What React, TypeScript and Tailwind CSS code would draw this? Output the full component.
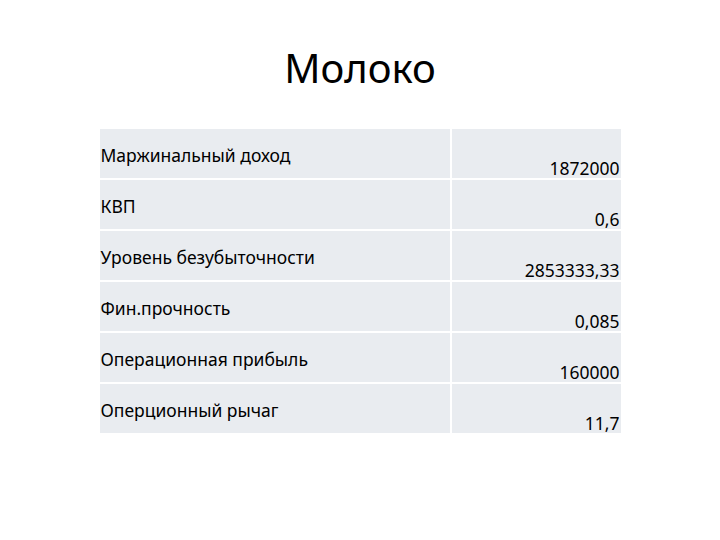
const rows = [
  { label: "Маржинальный доход", value: "1872000" },
  { label: "КВП", value: "0,6" },
  { label: "Уровень безубыточности", value: "2853333,33" },
  { label: "Фин.прочность", value: "0,085" },
  { label: "Операционная прибыль", value: "160000" },
  { label: "Оперционный рычаг", value: "11,7" },
];

export default function App() {
  return (
    <div
      className="flex h-[540px] w-[720px] flex-col items-center bg-white text-black"
      style={{ fontFamily: '"Noto Sans", "Open Sans", sans-serif' }}
    >
      <h1 className="mt-[42px] text-[40px] leading-[52px] font-normal">Молоко</h1>
      <div className="mt-[35px] flex w-[521px] flex-col gap-[2px] bg-white">
        {rows.map((row) => (
          <div key={row.label} className="flex h-[49px] gap-[2px]">
            <div className="w-[350px] bg-[#e9ecf0] pt-[15px] pl-[1px] text-[17.5px] leading-[22px]">
              {row.label}
            </div>
            <div className="flex flex-1 items-end justify-end bg-[#e9ecf0] pr-[1px] text-[17.5px] leading-[20px]">
              {row.value}
            </div>
          </div>
        ))}
      </div>
    </div>
  );
}
